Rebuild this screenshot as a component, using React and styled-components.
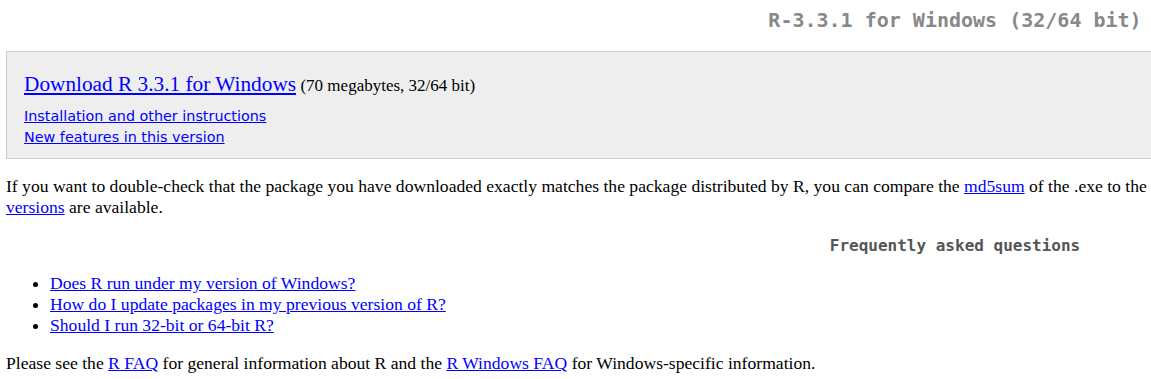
import React from 'react';
import styled, { createGlobalStyle } from 'styled-components';


const GlobalStyle = createGlobalStyle`
    html, body {
        margin: 0;
        overflow: hidden;
        background: #fff;
    }

    body {
        color: #000;
        font-family: "Liberation Serif", "Times New Roman", serif;
        font-size: 17.6px;
        line-height: 21px;
    }
`;

// The page is wider than the window, so its right side is cut off.
const Page = styled.div`
    padding: 0 6px;
    width: 1898px;
`;

const Title = styled.h1`
    color: #888;
    font-family: "DejaVu Sans Mono", "Liberation Mono", monospace;
    font-size: 20px;
    font-weight: bold;
    line-height: 24px;
    margin: 8px 0 19px;
    text-align: center;
`;

const DownloadBox = styled.div`
    background: #eee;
    border: 1px solid #ccc;
    padding: 20px 17px 10px;
`;

const MainLine = styled.div`
    line-height: 24px;
    margin-bottom: 8px;
`;

const MainLink = styled.a`
    color: #00f;
    font-size: 21.3px;
`;

const Note = styled.span`
    font-size: 17px;
`;

const SideLink = styled.a`
    color: #00f;
    display: block;
    font-family: "DejaVu Sans", Verdana, sans-serif;
    font-size: 14.35px;
    line-height: 21px;
    width: fit-content;
`;

const Text = styled.p`
    margin: 17px 0;
`;

const Link = styled.a`
    color: #00f;
`;

const SectionHeading = styled.h2`
    color: #555;
    font-family: "DejaVu Sans Mono", "Liberation Mono", monospace;
    font-size: 16px;
    font-weight: bold;
    line-height: 21px;
    margin: 16px 0 17px;
    text-align: center;
`;

const List = styled.ul`
    margin: 16px 0 15px;
    padding-left: 44px;
`;


export default function App() {
    return (
        <Page>
            <GlobalStyle />
            <Title>R-3.3.1 for Windows (32/64 bit)</Title>
            <DownloadBox>
                <MainLine>
                    <MainLink href = '#'>Download R 3.3.1 for Windows</MainLink>
                    {' '}
                    <Note>(70 megabytes, 32/64 bit)</Note>
                </MainLine>
                <SideLink href = '#'>Installation and other instructions</SideLink>
                <SideLink href = '#'>New features in this version</SideLink>
            </DownloadBox>
            <Text>
                If you want to double-check that the package you have downloaded exactly
                matches the package distributed by R, you can compare
                the <Link href = '#'>md5sum</Link> of the .exe to the
                <br />
                <Link href = '#'>versions</Link> are available.
            </Text>
            <SectionHeading>Frequently asked questions</SectionHeading>
            <List>
                <li><Link href = '#'>Does R run under my version of Windows?</Link></li>
                <li><Link href = '#'>How do I update packages in my previous version of R?</Link></li>
                <li><Link href = '#'>Should I run 32-bit or 64-bit R?</Link></li>
            </List>
            <Text>
                Please see the <Link href = '#'>R FAQ</Link> for general information about R and
                the <Link href = '#'>R Windows FAQ</Link> for Windows-specific information.
            </Text>
        </Page>
    );
}
